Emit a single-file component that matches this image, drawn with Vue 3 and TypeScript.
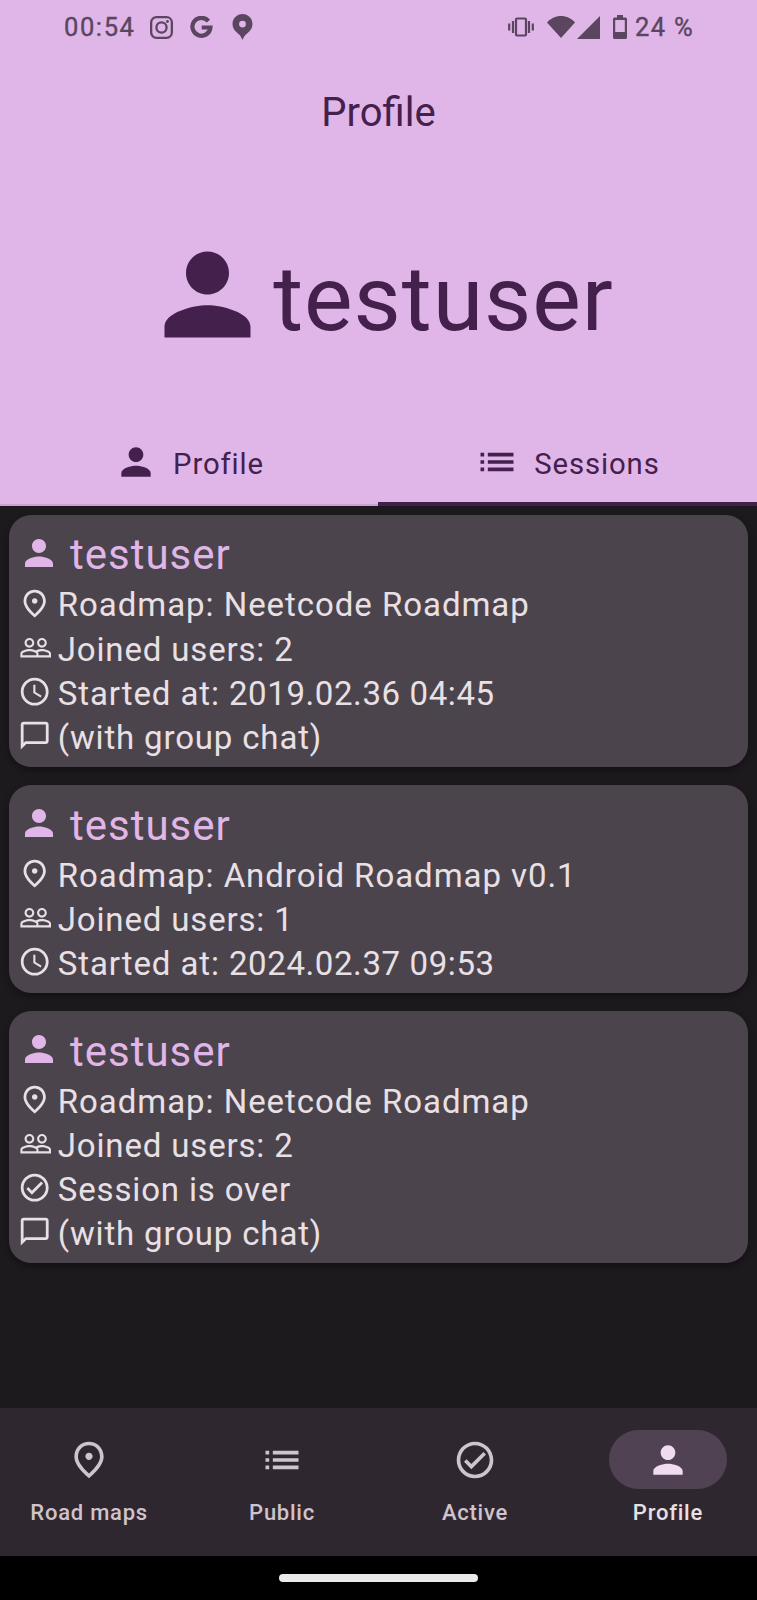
<script setup lang="ts">
type IconName = 'person' | 'list' | 'pin' | 'people' | 'clock' | 'chat' | 'check'

interface Line {
  icon: IconName
  text: string
  date?: string
}

interface Session {
  owner: string
  lines: Line[]
}

const icons: Record<IconName, string> = {
  person:
    'M12 12c2.21 0 4-1.79 4-4s-1.79-4-4-4-4 1.79-4 4 1.79 4 4 4zm0 2c-2.67 0-8 1.34-8 4v2h16v-2c0-2.66-5.33-4-8-4z',
  list: 'M3 13h2v-2H3v2zm0 4h2v-2H3v2zm0-8h2V7H3v2zm4 4h14v-2H7v2zm0 4h14v-2H7v2zM7 7v2h14V7H7z',
  pin: 'M12 12c-1.1 0-2-.9-2-2s.9-2 2-2 2 .9 2 2-.9 2-2 2zm6-1.8C18 6.57 15.35 4 12 4s-6 2.57-6 6.2c0 2.34 1.95 5.44 6 9.14 4.05-3.7 6-6.8 6-9.14zM12 2c4.2 0 8 3.22 8 8.2 0 3.32-2.67 7.25-8 11.8-5.33-4.55-8-8.48-8-11.8C4 5.22 7.8 2 12 2z',
  people:
    'M16.5 13c-1.2 0-3.07.34-4.5 1-1.43-.67-3.3-1-4.5-1C5.33 13 1 14.08 1 16.25V19h22v-2.75c0-2.17-4.33-3.25-6.5-3.25zm-4 4.5h-10v-1.25c0-.54 2.56-1.75 5-1.75s5 1.21 5 1.75v1.25zm9 0H14v-1.25c0-.46-.2-.86-.52-1.22.88-.3 1.96-.53 3.02-.53 2.44 0 5 1.21 5 1.75v1.25zM7.5 12c1.93 0 3.5-1.57 3.5-3.5S9.43 5 7.5 5 4 6.57 4 8.5 5.57 12 7.5 12zm0-5.5c1.1 0 2 .9 2 2s-.9 2-2 2-2-.9-2-2 .9-2 2-2zm9 5.5c1.93 0 3.5-1.57 3.5-3.5S18.43 5 16.5 5 13 6.57 13 8.5s1.57 3.5 3.5 3.5zm0-5.5c1.1 0 2 .9 2 2s-.9 2-2 2-2-.9-2-2 .9-2 2-2z',
  clock:
    'M11.99 2C6.47 2 2 6.48 2 12s4.47 10 9.99 10C17.52 22 22 17.52 22 12S17.52 2 11.99 2zM12 20c-4.42 0-8-3.58-8-8s3.58-8 8-8 8 3.58 8 8-3.58 8-8 8zm.5-13H11v6l5.25 3.15.75-1.23-4.5-2.67z',
  chat: 'M20 2H4c-1.1 0-2 .9-2 2v18l4-4h14c1.1 0 2-.9 2-2V4c0-1.1-.9-2-2-2zm0 14H5.17L4 17.17V4h16v12z',
  check:
    'M12 2C6.48 2 2 6.48 2 12s4.48 10 10 10 10-4.48 10-10S17.52 2 12 2zm0 18c-4.41 0-8-3.59-8-8s3.59-8 8-8 8 3.59 8 8-3.59 8-8 8zm4.59-12.42L10 14.17l-2.59-2.58L6 13l4 4 8-8z',
}

const tabs: { icon: IconName; label: string; active: boolean }[] = [
  { icon: 'person', label: 'Profile', active: false },
  { icon: 'list', label: 'Sessions', active: true },
]

const sessions: Session[] = [
  {
    owner: 'testuser',
    lines: [
      { icon: 'pin', text: 'Roadmap: Neetcode Roadmap' },
      { icon: 'people', text: 'Joined users: 2' },
      { icon: 'clock', text: 'Started at: ', date: '2019.02.36 04:45' },
      { icon: 'chat', text: '(with group chat)' },
    ],
  },
  {
    owner: 'testuser',
    lines: [
      { icon: 'pin', text: 'Roadmap: Android Roadmap v0.1' },
      { icon: 'people', text: 'Joined users: 1' },
      { icon: 'clock', text: 'Started at: ', date: '2024.02.37 09:53' },
    ],
  },
  {
    owner: 'testuser',
    lines: [
      { icon: 'pin', text: 'Roadmap: Neetcode Roadmap' },
      { icon: 'people', text: 'Joined users: 2' },
      { icon: 'check', text: 'Session is over' },
      { icon: 'chat', text: '(with group chat)' },
    ],
  },
]

const navItems: { icon: IconName; label: string; active: boolean }[] = [
  { icon: 'pin', label: 'Road maps', active: false },
  { icon: 'list', label: 'Public', active: false },
  { icon: 'check', label: 'Active', active: false },
  { icon: 'person', label: 'Profile', active: true },
]
</script>

<template>
  <div class="screen">
    <header class="top">
      <div class="status">
        <span class="time">00:54</span>
        <svg class="s-insta" viewBox="0 0 24 24" fill="none" stroke="currentColor" stroke-width="2.4">
          <rect x="1.2" y="1.2" width="21.6" height="21.6" rx="5.5" />
          <circle cx="12" cy="12" r="5.3" />
          <circle cx="18.2" cy="5.8" r="1.5" fill="currentColor" stroke="none" />
        </svg>
        <svg class="s-google" viewBox="0 0 24 24" fill="none" stroke="currentColor" stroke-width="4.4">
          <path d="M19.2 5.3A9.4 9.4 0 1 0 21.3 12H12.2" />
        </svg>
        <svg class="s-pin" viewBox="0 0 20 26" fill="currentColor" fill-rule="evenodd">
          <path
            d="M10 0C4.4 0 0 4.4 0 10c0 4.2 2.4 7.2 5.4 9.4 2.200 1.700 3.400 3.300 4.600 6.600 1.200-3.300 2.400-4.900 4.600-6.600 3-2.200 5.400-5.200 5.400-9.400C20 4.400 15.600 0 10 0zm0 6.700a3.400 3.400 0 1 1 0 6.800 3.400 3.400 0 0 1 0-6.800z"
          />
        </svg>
        <span class="spacer"></span>
        <svg class="s-vibrate" viewBox="0 0 26 20" fill="none" stroke="currentColor" stroke-width="2.2">
          <rect x="8" y="1.5" width="10" height="17" rx="1" />
          <path d="M5 4v12M1.2 6.5v7M21 4v12M24.8 6.5v7" />
        </svg>
        <svg class="s-wifi" viewBox="0 0 28 22" fill="currentColor">
          <path d="M0 6.5C3.5 2.5 8.5 0 14 0s10.5 2.5 14 6.5L14 22z" />
        </svg>
        <svg class="s-signal" viewBox="0 0 23 23" fill="currentColor"><path d="M23 0v23H0z" /></svg>
        <svg class="s-battery" viewBox="0 0 14 24" fill="currentColor" fill-rule="evenodd">
          <path
            d="M4 0h6v2.500h2.500A1.500 1.500 0 0 1 14 4v18.500a1.500 1.500 0 0 1-1.500 1.500h-11A1.500 1.500 0 0 1 0 22.500V4a1.500 1.500 0 0 1 1.500-1.500H4zM2.200 5v12h9.600V5z"
          />
        </svg>
        <span class="battery-text">24 %</span>
      </div>

      <h1 class="title">Profile</h1>

      <div class="hero">
        <svg class="hero-icon" viewBox="0 0 24 24"><path :d="icons.person" /></svg>
        <span class="hero-name">testuser</span>
      </div>

      <nav class="tabs">
        <div v-for="tab in tabs" :key="tab.label" class="tab" :class="{ active: tab.active }">
          <svg class="icon" viewBox="0 0 24 24"><path :d="icons[tab.icon]" /></svg>
          <span class="tab-label">{{ tab.label }}</span>
        </div>
      </nav>
    </header>

    <main class="content">
      <article v-for="(session, index) in sessions" :key="index" class="card">
        <div class="owner">
          <svg class="owner-icon" viewBox="0 0 24 24"><path :d="icons.person" /></svg>
          <span class="owner-name">{{ session.owner }}</span>
        </div>
        <div v-for="line in session.lines" :key="line.text" class="line" :class="line.icon">
          <svg class="line-icon" viewBox="0 0 24 24"><path :d="icons[line.icon]" /></svg>
          <span class="line-text">{{ line.text }}<span v-if="line.date" class="date">{{ line.date }}</span></span>
        </div>
      </article>
    </main>

    <nav class="bottom">
      <div v-for="item in navItems" :key="item.label" class="nav-item" :class="{ active: item.active }">
        <span class="pill">
          <svg class="icon" viewBox="0 0 24 24"><path :d="icons[item.icon]" /></svg>
        </span>
        <span class="nav-label">{{ item.label }}</span>
      </div>
    </nav>

    <div class="gesture"><span class="handle"></span></div>
  </div>
</template>

<style>
body {
  margin: 0;
  background: #1d1a1d;
}
</style>

<style scoped>
.screen {
  width: 757px;
  height: 1600px;
  display: flex;
  flex-direction: column;
  overflow: hidden;
  background: #1d1a1d;
  font-family: Roboto, 'Liberation Sans', sans-serif;
  white-space: nowrap;
}

svg {
  display: block;
  flex: none;
}

.icon,
.hero-icon,
.owner-icon,
.line-icon {
  fill: currentColor;
}

.icon {
  width: 44px;
  height: 44px;
}

.top {
  height: 506px;
  flex: none;
  display: flex;
  flex-direction: column;
  background: #e0b6e8;
  color: #44204c;
}

.status {
  height: 54px;
  padding: 0 64px;
  display: flex;
  align-items: center;
  color: #5b465f;
  font-size: 25.5px;
  line-height: 54px;
  -webkit-text-stroke: 0.4px currentColor;
}

.time {
  width: 85.5px;
  letter-spacing: 1.6px;
}

.s-insta {
  width: 23px;
  height: 23px;
  margin-right: 17.5px;
}

.s-google {
  width: 23px;
  height: 23px;
  margin-right: 19px;
}

.s-pin {
  width: 21px;
  height: 26px;
}

.spacer {
  flex: 1;
}

.s-vibrate {
  width: 26px;
  height: 20px;
  margin-right: 13px;
}

.s-wifi {
  width: 28px;
  height: 22px;
  margin-right: 2px;
}

.s-signal {
  width: 23px;
  height: 23px;
  margin-right: 13px;
}

.s-battery {
  width: 14px;
  height: 24px;
  margin-right: 8px;
}

.battery-text {
  width: 58px;
  letter-spacing: 1.3px;
}

.title {
  height: 117px;
  margin: 0;
  font-size: 40px;
  font-weight: 400;
  line-height: 118px;
  text-align: center;
}

.hero {
  height: 246px;
  display: flex;
  align-items: center;
  justify-content: center;
}

.hero-icon {
  width: 129px;
  height: 129px;
}

.hero-name {
  padding: 10px 0 0 1px;
  font-size: 91.6px;
  line-height: 120px;
  letter-spacing: 0.92px;
}

.tabs {
  height: 89px;
  display: grid;
  grid-template-columns: 378px 379px;
}

.tab {
  display: flex;
  align-items: center;
  justify-content: center;
  gap: 15px;
  font-size: 29.3px;
  letter-spacing: 0.88px;
  box-shadow: inset 0 -2px #c9a2cf;
}

.tab-label {
  padding-top: 4px;
}

.tab.active {
  box-shadow: inset 0 -4px #44204c;
}

.content {
  flex: 1;
  padding: 9px;
  display: flex;
  flex-direction: column;
  gap: 18px;
}

.card {
  padding: 9px;
  border-radius: 22px;
  background: #4c444c;
  color: #e8e0e5;
  box-shadow: 0 3px 7px rgba(0, 0, 0, 0.4);
}

.owner {
  height: 57.4px;
  box-sizing: border-box;
  padding-top: 0.6px;
  display: flex;
  align-items: center;
  gap: 10px;
  color: #e0b6e8;
}

.owner-icon {
  width: 42px;
  height: 42px;
}

.owner-name {
  padding-top: 5px;
  font-size: 42px;
  line-height: 50px;
  letter-spacing: 1px;
}

.line {
  height: 44.2px;
  display: flex;
  align-items: center;
  gap: 6.4px;
}

.line-icon {
  width: 33.4px;
  height: 33.4px;
}

.line.people .line-icon {
  margin-left: 0.6px;
  margin-right: -0.6px;
}

.line-text {
  padding-top: 4px;
  font-size: 33px;
  line-height: 40px;
  letter-spacing: 0.84px;
  white-space: pre;
}

.line.pin .line-text {
  letter-spacing: 0.95px;
}

.line.clock .line-text {
  letter-spacing: 0.9px;
}

.line.clock .date {
  letter-spacing: 0.6px;
}

.bottom {
  height: 148px;
  flex: none;
  box-sizing: border-box;
  padding-top: 22px;
  display: flex;
  gap: 14.7px;
  background: #2f272f;
  color: #cfc3cd;
}

.nav-item {
  flex: 1 1 0;
  display: flex;
  flex-direction: column;
  align-items: center;
}

.pill {
  width: 118px;
  height: 59px;
  border-radius: 30px;
  display: flex;
  align-items: center;
  justify-content: center;
}

.nav-item.active {
  color: #e8e0e5;
}

.nav-item.active .pill {
  background: #504253;
  color: #f0dbf1;
}

.nav-label {
  margin-top: 9px;
  font-size: 22px;
  font-weight: 500;
  line-height: 30px;
  letter-spacing: 0.76px;
}

.gesture {
  height: 44px;
  flex: none;
  display: flex;
  align-items: center;
  justify-content: center;
  background: #000;
}

.handle {
  width: 199px;
  height: 8px;
  border-radius: 4px;
  background: #ebebeb;
}
</style>
